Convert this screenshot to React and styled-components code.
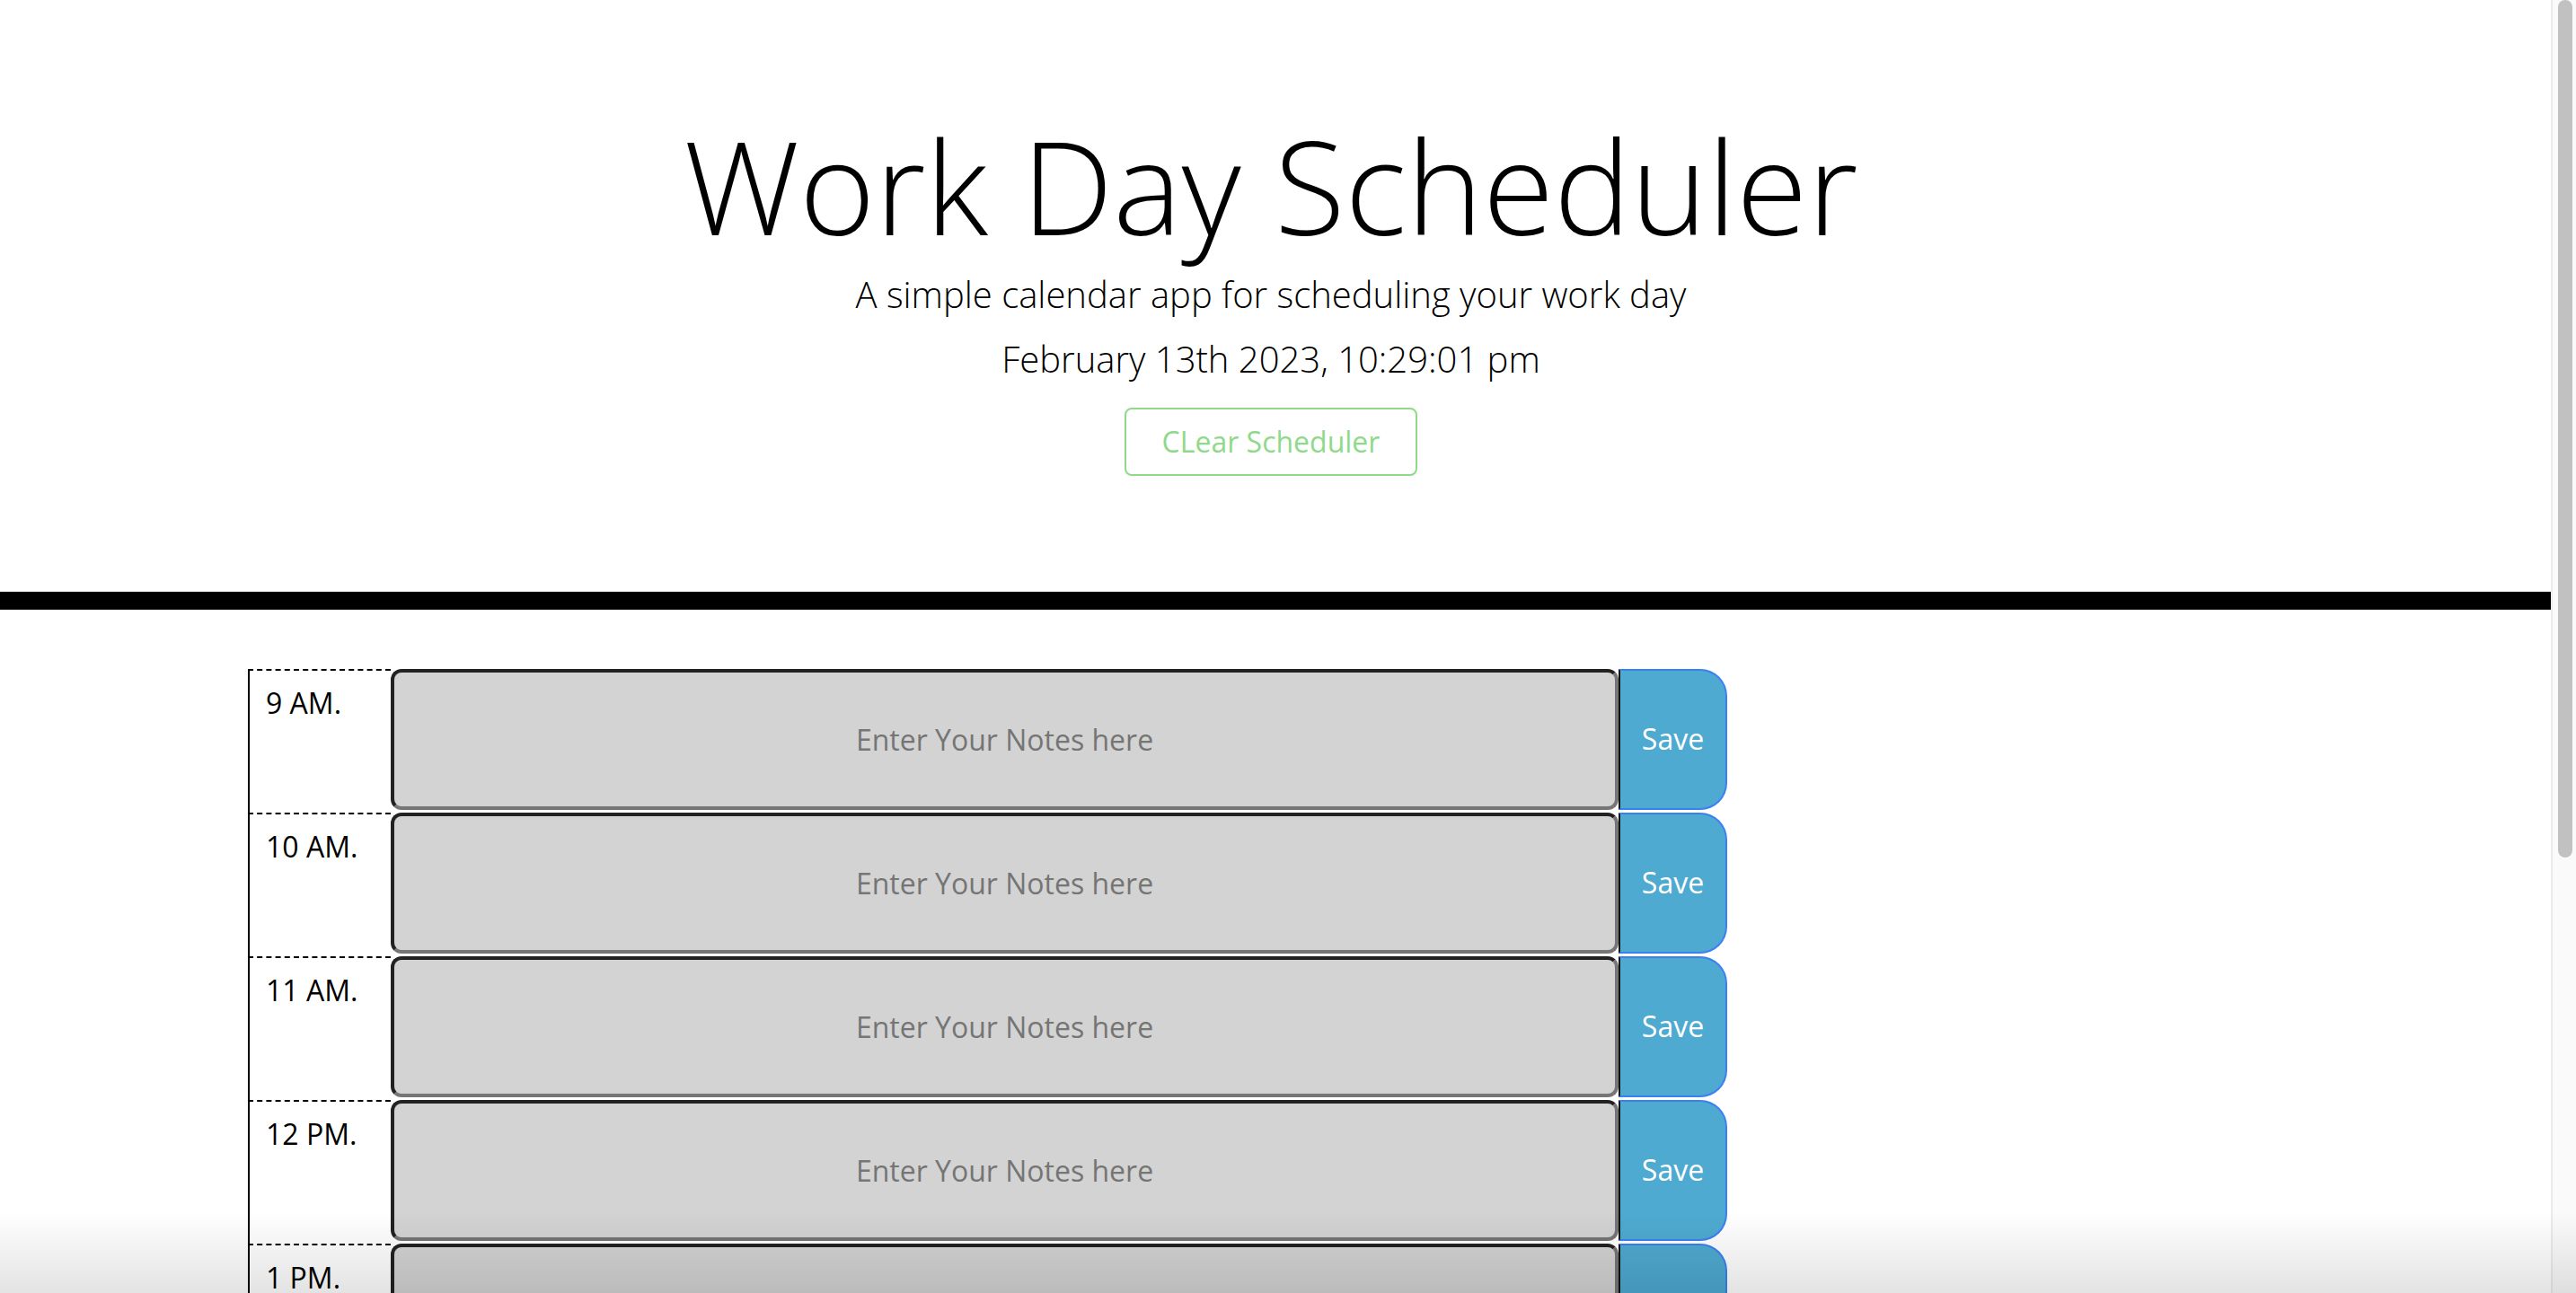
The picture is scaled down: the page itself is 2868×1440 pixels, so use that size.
import React from "react";
import styled, { createGlobalStyle } from "styled-components";

const GlobalStyle = createGlobalStyle`
  html, body {
    margin: 0;
    padding: 0;
    background: #ffffff;
    overflow: hidden;
  }
  body {
    font-family: "Open Sans", "Liberation Sans", sans-serif;
    color: #000;
  }
`;

const Shell = styled.div`
  display: flex;
  height: 100vh;
  overflow: hidden;
`;

const Page = styled.div`
  flex: 1;
  min-width: 0;
  overflow: hidden;
`;

const ScrollTrack = styled.div`
  box-sizing: border-box;
  width: 28px;
  flex: none;
  background: #fafafa;
  border-left: 2px solid #ebebeb;
  padding: 0 4px 0 6px;
`;

const ScrollThumb = styled.div`
  height: 955px;
  background: #c1c1c1;
  border-radius: 8px;
`;

const Header = styled.header`
  display: flex;
  flex-direction: column;
  align-items: center;
  text-align: center;
  padding: 120px 10px 129px 0;
  border-bottom: 20px solid #000;
  margin-bottom: 66px;
`;

const Title = styled.h1`
  margin: 0;
  font-size: 144px;
  font-weight: 300;
  line-height: 1.2;
`;

const Lead = styled.p`
  margin: ${(p) => p.$top}px 0 0;
  font-size: 40px;
  font-weight: 300;
  line-height: 1.5;
`;

const ClearButton = styled.button`
  margin-top: 24px;
  font-family: "Open Sans", "Liberation Sans", sans-serif;
  font-size: 32px;
  font-weight: 400;
  line-height: 1.5;
  padding: 12px 40px;
  color: #8fd98a;
  background: transparent;
  border: 2px solid #8fd98a;
  border-radius: 8px;
`;

const Schedule = styled.main`
  width: 2288px;
  margin: 0 auto;
  display: flex;
  flex-direction: column;
`;

const Row = styled.div`
  display: flex;
  height: 160px;
`;

const Hour = styled.div`
  box-sizing: border-box;
  width: 159px;
  flex: none;
  border-top: 2px dashed #000;
  border-left: 2px solid #000;
  padding: 12px 18px;
  font-size: 32px;
  line-height: 1.5;
  color: #000;
`;

const Notes = styled.textarea`
  box-sizing: border-box;
  width: 1367px;
  height: 157px;
  flex: none;
  margin: 0;
  resize: none;
  background: #d3d3d3;
  border-style: solid;
  border-width: 4px;
  border-color: #222222 #767676 #767676 #222222;
  border-radius: 12px;
  padding: 51px 10px 0;
  font-family: "Open Sans", "Liberation Sans", sans-serif;
  font-size: 32px;
  line-height: 1.5;
  text-align: center;
  color: #000;
  outline: none;
  &::placeholder {
    color: #757575;
  }
`;

const SaveButton = styled.button`
  box-sizing: border-box;
  width: 121px;
  height: 157px;
  flex: none;
  margin: 0;
  padding: 0;
  background: #4faad1;
  color: #fff;
  font-family: "Open Sans", "Liberation Sans", sans-serif;
  font-size: 32px;
  line-height: 1.5;
  border: 2px solid #3b80f3;
  border-left-color: #111;
  border-radius: 0 30px 30px 0;
`;

const BottomShade = styled.div`
  position: fixed;
  left: 0;
  right: 0;
  bottom: 0;
  height: 90px;
  pointer-events: none;
  background: linear-gradient(to bottom, rgba(0, 0, 0, 0), rgba(0, 0, 0, 0.11));
`;

const hours = [
  "9 AM.",
  "10 AM.",
  "11 AM.",
  "12 PM.",
  "1 PM.",
  "2 PM.",
  "3 PM.",
  "4 PM.",
  "5 PM.",
];

export default function App() {
  return (
    <>
      <GlobalStyle />
      <Shell>
        <Page>
          <Header>
            <Title>Work Day Scheduler</Title>
            <Lead $top={5}>A simple calendar app for scheduling your work day</Lead>
            <Lead $top={12}>February 13th 2023, 10:29:01 pm</Lead>
            <ClearButton>CLear Scheduler</ClearButton>
          </Header>
          <Schedule>
            {hours.map((h) => (
              <Row key={h}>
                <Hour>{h}</Hour>
                <Notes placeholder="Enter Your Notes here" />
                <SaveButton>Save</SaveButton>
              </Row>
            ))}
          </Schedule>
        </Page>
        <ScrollTrack>
          <ScrollThumb />
        </ScrollTrack>
      </Shell>
      <BottomShade />
    </>
  );
}
